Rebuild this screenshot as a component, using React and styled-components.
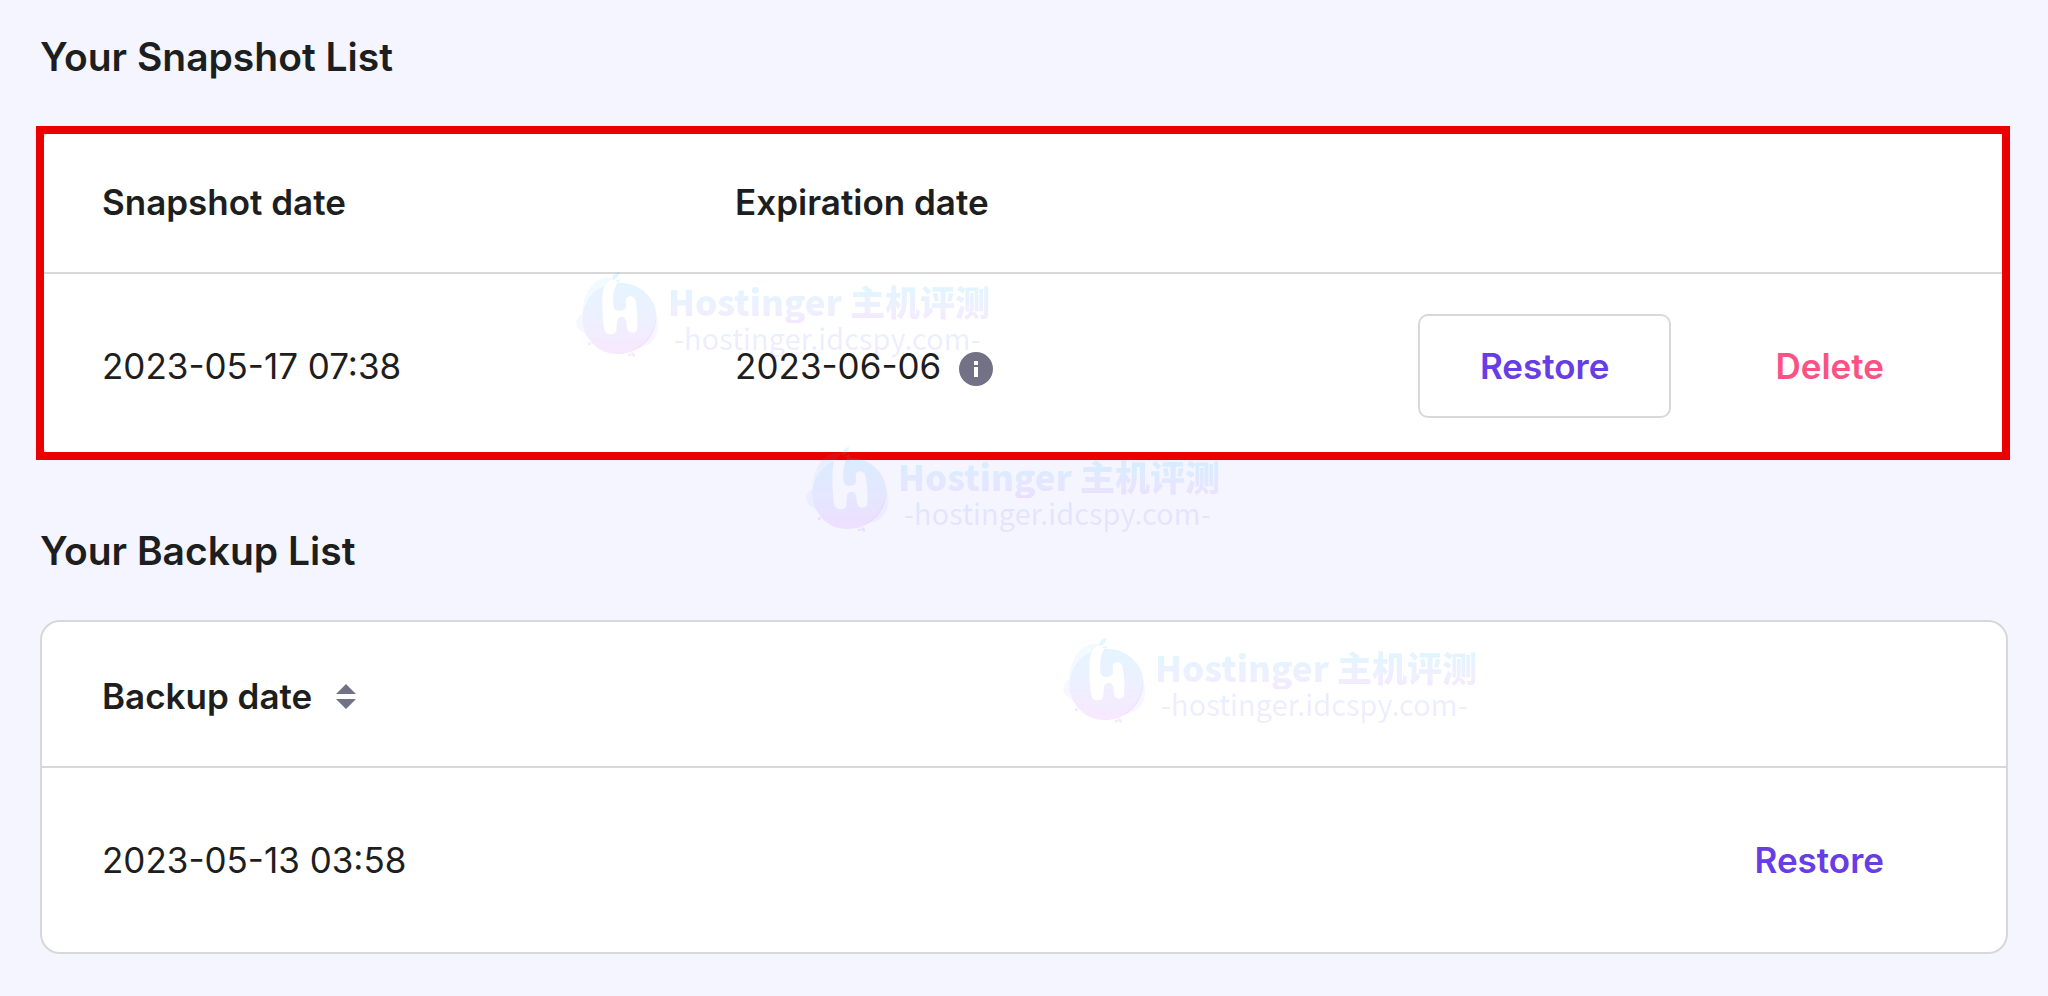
import React from 'react';
import styled, { createGlobalStyle } from 'styled-components';

const color = {
  page: '#f4f5ff',
  text: '#1d1e20',
  line: '#d8d8da',
  muted: '#727286',
  primary: '#673de6',
  danger: '#fc5185',
  highlight: '#eb0000',
};

const GlobalStyle = createGlobalStyle`
  *, *::before, *::after { box-sizing: border-box; }
  body {
    margin: 0;
    background: ${color.page};
    color: ${color.text};
    font-family: Inter, "Liberation Sans", sans-serif;
  }
`;

const Page = styled.main`
  position: relative;
  display: flex;
  flex-direction: column;
  gap: 67px;
  padding: 33px 40px 42px;
`;

const Section = styled.section`
  display: flex;
  flex-direction: column;
  gap: 45px;
`;

const Title = styled.h2`
  margin: 0;
  font-size: 39px;
  line-height: 48px;
  font-weight: 600;
`;

const Card = styled.div`
  position: relative;
  border: 2px solid ${color.line};
  border-radius: 20px;
  background: #fff;
`;

const HighlightedCard = styled(Card)`
  &::after {
    content: '';
    position: absolute;
    inset: -2px -4px -2px -6px;
    border: 8px solid ${color.highlight};
    pointer-events: none;
  }
`;

const Table = styled.table`
  width: 100%;
  border-collapse: separate;
  border-spacing: 0;
  table-layout: fixed;
`;

const HeadCell = styled.th`
  width: ${({ $width }) => $width || 'auto'};
  height: 146px;
  padding: 4px 45px 0;
  border-bottom: 2px solid ${color.line};
  font-size: 35px;
  line-height: 40px;
  font-weight: 600;
  text-align: left;
  white-space: nowrap;

  &:first-child { padding-left: 60px; }
`;

const Cell = styled.td`
  height: 184px;
  padding: 0 45px;
  font-size: 35px;
  line-height: 40px;
  white-space: nowrap;

  &:first-child { padding-left: 60px; }
  &:last-child { padding-right: 60px; }
`;

const WithIcon = styled.span`
  display: flex;
  align-items: flex-end;
  gap: 18px;
`;

const SortButton = styled.button`
  display: flex;
  align-items: center;
  gap: 24px;
  padding: 0;
  border: 0;
  background: none;
  color: inherit;
  font: inherit;
  cursor: pointer;
`;

const Icon = styled.svg`
  display: block;
  flex: none;
  fill: ${color.muted};
`;

const Actions = styled.div`
  display: flex;
  justify-content: flex-end;
  gap: 42px;
`;

const ActionButton = styled.button`
  height: 104px;
  padding: 0 60px;
  border: 2px solid ${({ $outlined }) => ($outlined ? color.line : 'transparent')};
  border-radius: 10px;
  background: none;
  color: ${({ $danger }) => ($danger ? color.danger : color.primary)};
  font-family: inherit;
  font-size: 35px;
  line-height: 40px;
  font-weight: 600;
  cursor: pointer;
`;

const WatermarkRoot = styled.div`
  position: absolute;
  left: ${({ $x }) => $x}px;
  top: ${({ $y }) => $y}px;
  display: flex;
  gap: 6px;
  pointer-events: none;
  user-select: none;
`;

const WatermarkText = styled.div`
  padding-top: 9px;
  font-family: "Noto Sans CJK SC", sans-serif;
  white-space: nowrap;
`;

const WatermarkName = styled.div`
  font-size: 35px;
  line-height: 44px;
  font-weight: 900;
  color: transparent;
  background: linear-gradient(rgba(60, 190, 255, 0.15) 25%, rgba(110, 90, 255, 0.1) 75%, rgba(190, 60, 255, 0.13));
  background-clip: text;
`;

const WatermarkUrl = styled.div`
  padding: 0 0 8px 6px;
  font-size: 29px;
  line-height: 28px;
  color: transparent;
  background: linear-gradient(rgba(70, 140, 255, 0.13) 10%, rgba(160, 80, 255, 0.12));
  background-clip: text;
`;

function Watermark({ id, x, y }) {
  const gradient = `mark-gradient-${id}`;
  const mask = `mark-cutout-${id}`;
  return (
    <WatermarkRoot $x={x} $y={y} aria-hidden="true">
      <svg width="87" height="90" viewBox="48 60 261 270">
        <defs>
          <linearGradient id={gradient} gradientUnits="userSpaceOnUse" x1="0" y1="90" x2="0" y2="312">
            <stop offset="0" stopColor="#38beff" stopOpacity="0.14" />
            <stop offset="0.5" stopColor="#5a78ff" stopOpacity="0.11" />
            <stop offset="1" stopColor="#c83cff" stopOpacity="0.12" />
          </linearGradient>
          <mask id={mask} maskUnits="userSpaceOnUse" x="40" y="50" width="280" height="290">
            <rect x="40" y="50" width="280" height="290" fill="#fff" />
            <path
              fill="#000"
              d="M172 84C149 87 135 102 132 126C128 163 130 203 136 239C140 256 169 257 172 242L174 214C175 197 199 195 201 212L204 234C207 253 235 252 235 234C236 203 235 176 229 151C225 135 201 135 200 151L201 169C200 187 166 187 164 170C161 147 162 118 174 101Z"
            />
          </mask>
        </defs>
        <g fill={`url(#${gradient})`} mask={`url(#${mask})`}>
          <path d="M181 98C244 98 292 146 292 200C292 262 241 312 175 312C112 312 70 260 70 205C70 143 120 98 181 98Z" />
          <path
            opacity="0.5"
            d="M70 190C50 204 48 224 58 237C68 248 81 251 87 259C73 240 68 216 70 190ZM292 190C304 225 298 260 275 279C260 292 236 293 222 301C260 281 287 249 292 190ZM70 190C70 141 98 92 130 86C147 81 161 83 165 91L158 100C115 105 76 145 70 190Z"
          />
        </g>
        <g fill={`url(#${gradient})`}>
          <path d="M160 90C158 77 168 68 180 66C181 78 173 88 160 90Z" />
          <path d="M169 95C172 90 179 89 184 92C180 97 174 97 169 95Z" />
          <circle cx="91" cy="281" r="5" />
          <ellipse cx="211" cy="315" rx="5" ry="4" />
          <path d="M218 306C226 307 230 314 227 321C219 320 215 314 218 306Z" />
        </g>
      </svg>
      <WatermarkText>
        <WatermarkName>Hostinger 主机评测</WatermarkName>
        <WatermarkUrl>-hostinger.idcspy.com-</WatermarkUrl>
      </WatermarkText>
    </WatermarkRoot>
  );
}

function InfoIcon() {
  return (
    <Icon width="34" height="34" viewBox="0 0 34 34" role="img" aria-label="Expiration details">
      <path fillRule="evenodd" d="M17 0a17 17 0 1 1 0 34a17 17 0 0 1 0-34ZM15 9v4h4v-4ZM15 15v10h4v-10Z" />
    </Icon>
  );
}

function SortIcon() {
  return (
    <Icon width="20" height="25" viewBox="0 0 20 25" aria-hidden="true">
      <path d="M10 0L20 10H0ZM0 15H20L10 25Z" />
    </Icon>
  );
}

export default function App() {
  return (
    <>
      <GlobalStyle />
      <Page>
        <Section>
          <Title>Your Snapshot List</Title>
          <HighlightedCard>
            <Table>
              <thead>
                <tr>
                  <HeadCell $width="33%">Snapshot date</HeadCell>
                  <HeadCell>Expiration date</HeadCell>
                  <HeadCell />
                </tr>
              </thead>
              <tbody>
                <tr>
                  <Cell>2023-05-17 07:38</Cell>
                  <Cell>
                    <WithIcon>
                      2023-06-06
                      <InfoIcon />
                    </WithIcon>
                  </Cell>
                  <Cell>
                    <Actions>
                      <ActionButton type="button" $outlined>Restore</ActionButton>
                      <ActionButton type="button" $danger>Delete</ActionButton>
                    </Actions>
                  </Cell>
                </tr>
              </tbody>
            </Table>
          </HighlightedCard>
        </Section>

        <Section>
          <Title>Your Backup List</Title>
          <Card>
            <Table>
              <thead>
                <tr>
                  <HeadCell>
                    <SortButton type="button">
                      Backup date
                      <SortIcon />
                    </SortButton>
                  </HeadCell>
                  <HeadCell />
                </tr>
              </thead>
              <tbody>
                <tr>
                  <Cell>2023-05-13 03:58</Cell>
                  <Cell>
                    <Actions>
                      <ActionButton type="button">Restore</ActionButton>
                    </Actions>
                  </Cell>
                </tr>
              </tbody>
            </Table>
          </Card>
        </Section>

        <Watermark id="a" x={575} y={270} />
        <Watermark id="b" x={805} y={445} />
        <Watermark id="c" x={1062} y={636} />
      </Page>
    </>
  );
}
